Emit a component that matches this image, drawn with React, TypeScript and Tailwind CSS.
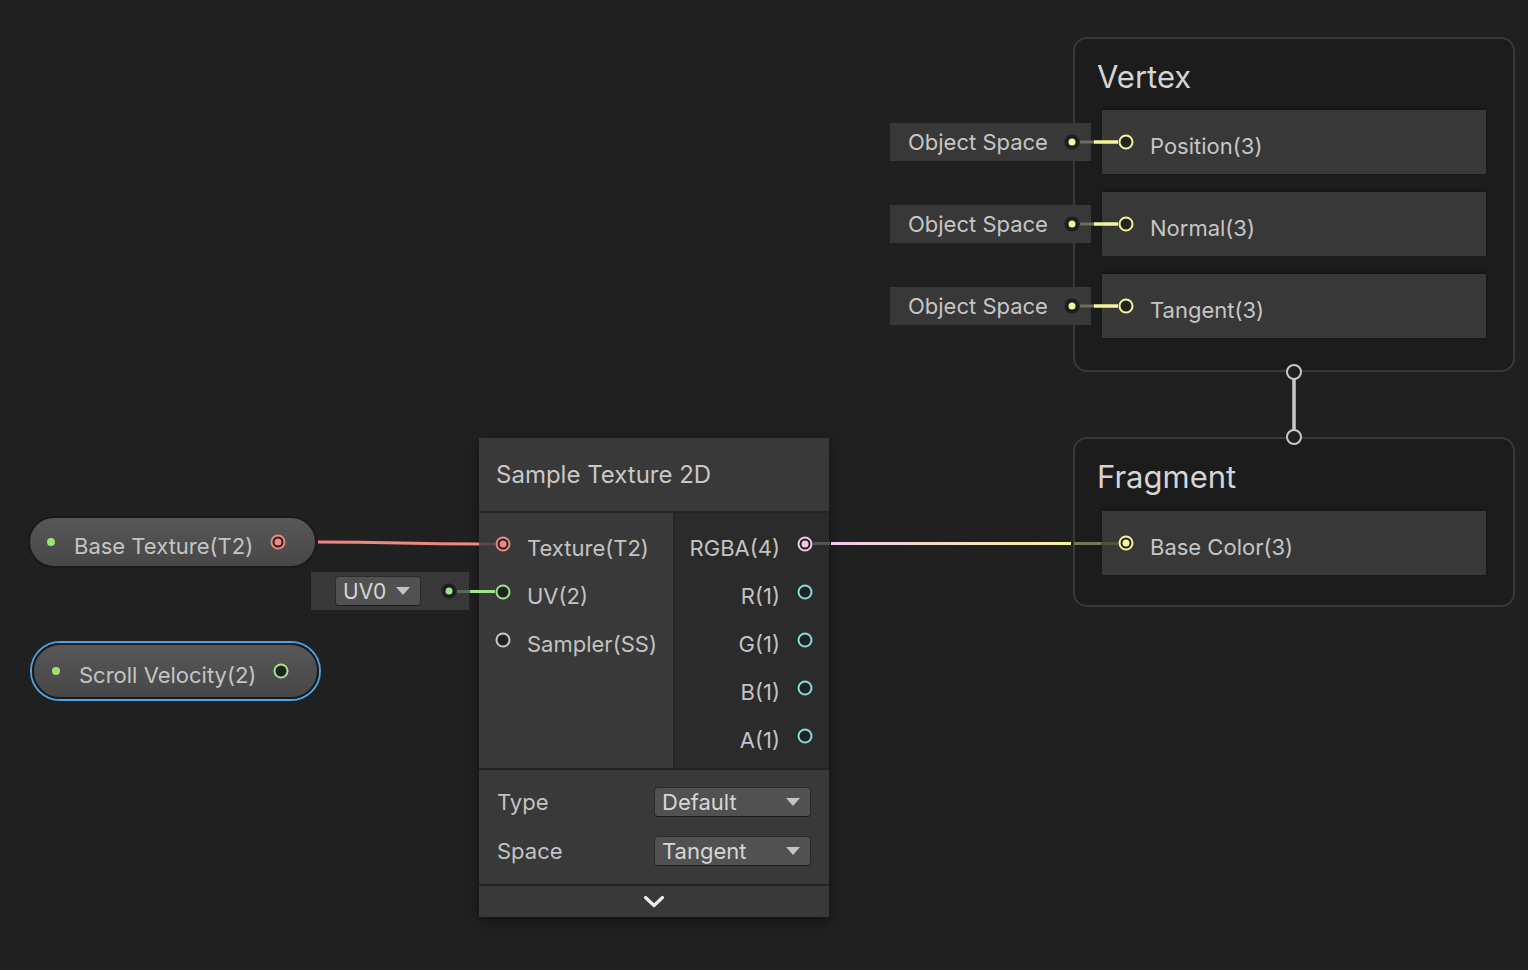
const YELLOW = '#f5f59b'
const RED = '#ef8782'
const GREEN = '#9de58d'
const PINK = '#f5c6f0'
const CYAN = '#84dbe5'
const GRAY = '#c8c8c8'

function Port({ color, filled }: { color: string; filled?: boolean }) {
  return (
    <svg width="16" height="16" viewBox="0 0 16 16" className="shrink-0">
      <circle cx="8" cy="8" r="6.5" fill="#222222" stroke={color} strokeWidth="2" />
      {filled && <circle cx="8" cy="8" r="3.5" fill={color} />}
    </svg>
  )
}

function OutDot({ color }: { color: string }) {
  return (
    <svg width="16" height="16" viewBox="0 0 16 16" className="shrink-0">
      <circle cx="8" cy="8" r="7.5" fill="#1d1d1d" />
      <circle cx="8" cy="8" r="3.5" fill={color} />
    </svg>
  )
}

function Caret() {
  return (
    <svg width="14" height="8" viewBox="0 0 14 8" className="shrink-0">
      <path d="M0 0 L14 0 L7 8 Z" fill="#c4c4c4" />
    </svg>
  )
}

function Dropdown({ value, className }: { value: string; className: string }) {
  return (
    <div
      className={`flex h-[30px] items-center justify-between rounded-[4px] border border-[#2b2b2b] border-b-[#1c1c1c] bg-[#515151] pl-[7px] pr-[10px] text-[22px] leading-none text-[#d6d6d6] ${className}`}
    >
      <span>{value}</span>
      <Caret />
    </div>
  )
}

function BlockRow({ label }: { label: string }) {
  return (
    <div className="flex h-[64px] w-[384px] items-center gap-[16px] bg-[#383838] pl-[16px] shadow-[0_-2px_3px_rgba(0,0,0,0.25)]">
      <Port color={YELLOW} />
      <span className="pt-[7px] text-[22px] leading-none text-[#c6c6c6]">{label}</span>
    </div>
  )
}

function ObjectSpace({ top }: { top: string }) {
  return (
    <div
      className={`absolute left-[890px] flex h-[38px] w-[201px] items-center justify-between bg-[#383838] pl-[18px] pr-[11px] ${top}`}
    >
      <span className="text-[22px] leading-none text-[#c6c6c6]">Object Space</span>
      <OutDot color={YELLOW} />
    </div>
  )
}

function InRow({ label, color, filled }: { label: string; color: string; filled?: boolean }) {
  return (
    <div className="flex h-[48px] items-center gap-[16px] pl-[16px]">
      <Port color={color} filled={filled} />
      <span className="pt-[7px] text-[22px] leading-none text-[#c3c3c3]">{label}</span>
    </div>
  )
}

function OutRow({ label, color, filled }: { label: string; color: string; filled?: boolean }) {
  return (
    <div className="flex h-[48px] items-center justify-end gap-[17px] pr-[16px]">
      <span className="pt-[7px] text-[22px] leading-none text-[#c3c3c3]">{label}</span>
      <Port color={color} filled={filled} />
    </div>
  )
}

function Wires() {
  return (
    <svg className="pointer-events-none absolute inset-0" width="1528" height="970" viewBox="0 0 1528 970">
      <defs>
        <linearGradient id="rgba" gradientUnits="userSpaceOnUse" x1="831" y1="0" x2="1071" y2="0">
          <stop offset="0" stopColor={PINK} />
          <stop offset="1" stopColor={YELLOW} />
        </linearGradient>
      </defs>
      {/* base texture -> texture */}
      <path d="M318 542 C 400 542, 400 544, 479 544" stroke={RED} strokeWidth="3.2" fill="none" />
      <line x1="479" y1="544" x2="495" y2="544" stroke="#5e4845" strokeWidth="3" />
      {/* uv0 -> uv */}
      <line x1="457" y1="591.5" x2="470" y2="591.5" stroke="#566d51" strokeWidth="3" />
      <line x1="470" y1="591.5" x2="495" y2="591.5" stroke={GREEN} strokeWidth="3" />
      {/* rgba -> base color */}
      <line x1="813" y1="543.5" x2="830" y2="543.5" stroke="#5b4f5a" strokeWidth="3" />
      <line x1="831" y1="543.5" x2="1071" y2="543.5" stroke="url(#rgba)" strokeWidth="3.2" />
      <line x1="1074" y1="543.5" x2="1101" y2="543.5" stroke="#75765a" strokeWidth="3" />
      <line x1="1101" y1="543.5" x2="1118" y2="543.5" stroke="#50513f" strokeWidth="3" />
      {/* object space -> vertex ports */}
      {[142, 224, 306].map((y) => (
        <g key={y}>
          <line x1="1080" y1={y} x2="1094" y2={y} stroke="#6e705a" strokeWidth="3" />
          <line x1="1094" y1={y} x2="1118" y2={y} stroke={YELLOW} strokeWidth="3.5" />
        </g>
      ))}
      {/* vertex -> fragment */}
      <line x1="1294" y1="379" x2="1294" y2="430" stroke={GRAY} strokeWidth="3.5" />
      <circle cx="1294" cy="372" r="7" fill="#1f1f1f" stroke={GRAY} strokeWidth="2" />
      <circle cx="1294" cy="437" r="7" fill="#1f1f1f" stroke={GRAY} strokeWidth="2" />
    </svg>
  )
}

export default function App() {
  return (
    <div className="relative h-[970px] w-[1528px] overflow-hidden bg-[#202020] font-[Inter,sans-serif]">
      {/* Vertex block */}
      <div className="absolute left-[1073px] top-[37px] flex h-[335px] w-[442px] flex-col rounded-[14px] border-2 border-[#383838] bg-[#1c1c1c] pt-[19px]">
        <div className="ml-[22px] h-[38px] text-[31px] leading-[38px] text-[#d4d4d4]">Vertex</div>
        <div className="ml-[27px] mt-[14px] flex flex-col gap-[18px]">
          <BlockRow label="Position(3)" />
          <BlockRow label="Normal(3)" />
          <BlockRow label="Tangent(3)" />
        </div>
      </div>

      <ObjectSpace top="top-[123px]" />
      <ObjectSpace top="top-[205px]" />
      <ObjectSpace top="top-[287px]" />

      {/* Fragment block */}
      <div className="absolute left-[1073px] top-[437px] flex h-[170px] w-[442px] flex-col rounded-[14px] border-2 border-[#383838] bg-[#1c1c1c] pt-[19px]">
        <div className="ml-[22px] h-[38px] text-[31px] leading-[38px] text-[#d4d4d4]">Fragment</div>
        <div className="ml-[27px] mt-[15px]">
          <div className="flex h-[64px] w-[384px] items-center gap-[16px] bg-[#383838] pl-[16px] shadow-[0_-2px_3px_rgba(0,0,0,0.25)]">
            <Port color={YELLOW} filled />
            <span className="pt-[7px] text-[22px] leading-none text-[#c6c6c6]">Base Color(3)</span>
          </div>
        </div>
      </div>

      {/* Sample Texture 2D */}
      <div className="absolute left-[479px] top-[438px] flex w-[350px] flex-col bg-[#242424] shadow-[0_4px_10px_rgba(0,0,0,0.45)]">
        <div className="flex h-[73px] items-center bg-[#393939] pl-[17px] text-[24px] leading-none text-[#c8c8c8]">
          Sample Texture 2D
        </div>
        <div className="mt-[2px] flex h-[255px]">
          <div className="w-[194px] bg-[#393939] pt-[7px]">
            <InRow label="Texture(T2)" color={RED} filled />
            <InRow label="UV(2)" color={GREEN} />
            <InRow label="Sampler(SS)" color={GRAY} />
          </div>
          <div className="ml-[2px] flex-1 bg-[#2b2b2b] pt-[7px]">
            <OutRow label="RGBA(4)" color={PINK} filled />
            <OutRow label="R(1)" color={CYAN} />
            <OutRow label="G(1)" color={CYAN} />
            <OutRow label="B(1)" color={CYAN} />
            <OutRow label="A(1)" color={CYAN} />
          </div>
        </div>
        <div className="mt-[2px] flex h-[114px] flex-col gap-[19px] bg-[#393939] pl-[18px] pt-[17px]">
          <div className="flex h-[30px] items-center">
            <span className="w-[157px] text-[22px] leading-none text-[#c3c3c3]">Type</span>
            <Dropdown value="Default" className="w-[157px]" />
          </div>
          <div className="flex h-[30px] items-center">
            <span className="w-[157px] text-[22px] leading-none text-[#c3c3c3]">Space</span>
            <Dropdown value="Tangent" className="w-[157px]" />
          </div>
        </div>
        <div className="mt-[2px] flex h-[31px] items-center justify-center bg-[#393939]">
          <svg width="22" height="13" viewBox="0 0 22 13">
            <path d="M2.5 2.5 L11 10.5 L19.5 2.5" stroke="#ececec" strokeWidth="3.2" fill="none" strokeLinecap="round" strokeLinejoin="round" />
          </svg>
        </div>
      </div>

      {/* Base Texture property */}
      <div className="absolute left-[28px] top-[516px] flex h-[52px] w-[289px] items-center rounded-full border-2 border-[#1a1a1a] bg-linear-to-b from-[#575757] to-[#474747] pl-[17px]">
        <span className="h-[8px] w-[8px] shrink-0 rounded-full bg-[#9de373]" />
        <span className="ml-[19px] pt-[7px] text-[22px] leading-none text-[#c4c4c4]">Base Texture(T2)</span>
        <span className="ml-[17px]">
          <Port color={RED} filled />
        </span>
      </div>

      {/* UV0 */}
      <div className="absolute left-[311px] top-[572px] flex h-[38px] w-[158px] items-center justify-between bg-[#383838] pl-[24px] pr-[12px]">
        <div className="flex h-[30px] w-[86px] items-center justify-between rounded-[4px] border border-[#2b2b2b] border-b-[#1c1c1c] bg-[#515151] pl-[7px] pr-[10px] text-[21px] leading-none text-[#d6d6d6]">
          <span>UV0</span>
          <Caret />
        </div>
        <OutDot color={GREEN} />
      </div>

      {/* Scroll Velocity property (selected) */}
      <div className="absolute left-[30px] top-[641px] h-[60px] w-[291px] rounded-full border-2 border-[#4ba3e6]">
        <div className="flex h-full w-full items-center rounded-full border-2 border-[#1a1a1a] bg-linear-to-b from-[#575757] to-[#474747] pl-[18px]">
          <span className="h-[8px] w-[8px] shrink-0 rounded-full bg-[#9de373]" />
          <span className="ml-[19px] pt-[7px] text-[22px] leading-none text-[#c4c4c4]">Scroll Velocity(2)</span>
          <span className="ml-[17px]">
            <Port color={GREEN} />
          </span>
        </div>
      </div>

      <Wires />
    </div>
  )
}
